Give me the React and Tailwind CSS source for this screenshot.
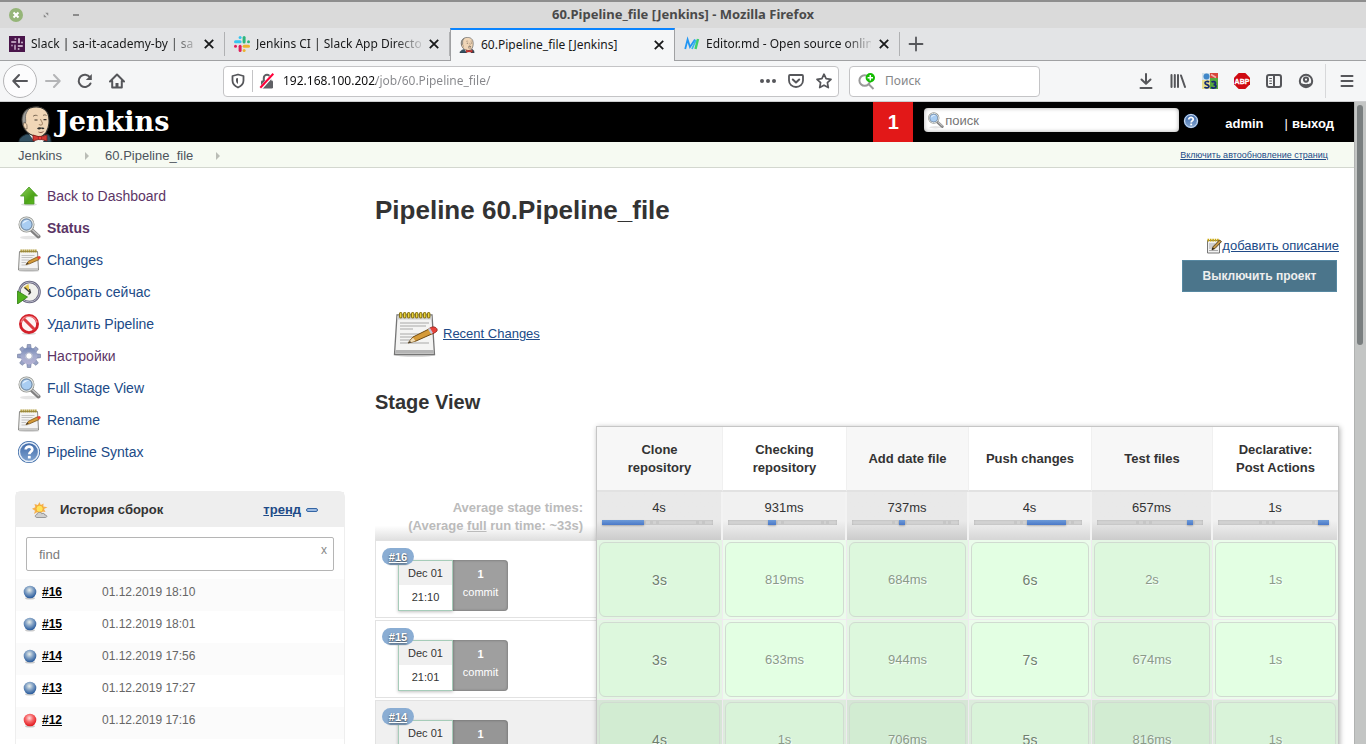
import React from "react";

/* ---------- browser chrome icons ---------- */

function SlackMark({ colors }) {
  const [a, b, c, d] = colors;
  return (
    <svg viewBox="0 0 16 16" className="size-4 shrink-0" aria-hidden="true">
      <g fill={a}><rect x="4.6" y="0" width="3" height="3" rx="1.5" /><rect x="0" y="4.3" width="7.6" height="3" rx="1.5" /></g>
      <g fill={b}><rect x="13" y="4.3" width="3" height="3" rx="1.5" /><rect x="8.6" y="0" width="3" height="7.4" rx="1.5" /></g>
      <g fill={c}><rect x="8.6" y="13" width="3" height="3" rx="1.5" /><rect x="8.6" y="8.8" width="7.4" height="3" rx="1.5" /></g>
      <g fill={d}><rect x="0" y="8.8" width="3" height="3" rx="1.5" /><rect x="4.6" y="8.8" width="3" height="7.2" rx="1.5" /></g>
    </svg>
  );
}

function SlackPurple() {
  const marks = [[0, "#b79ab8"], [90, "#c9b2ca"], [180, "#c4abc5"], [270, "#ab8bac"]];
  return (
    <svg viewBox="0 0 16 16" className="size-4 shrink-0" aria-hidden="true">
      <rect width="16" height="16" fill="#4a154b" />
      {marks.map(([angle, fill]) => (
        <g key={angle} fill={fill} transform={`rotate(${angle} 8 8)`}>
          <rect x="5.400" y="2" width="2" height="2" rx="1" />
          <rect x="2" y="5" width="5.400" height="2" rx="1" />
        </g>
      ))}
    </svg>
  );
}

function Butler({ className }) {
  return (
    <svg viewBox="0 0 34 36" className={className} aria-hidden="true">
      <path d="M1 36c0-4 3-6 8-8l12 3 8-3c3 1 4 4 4 8z" fill="#335061" stroke="#1b2a33" />
      <path d="M11 28l6 8h8l4-7-8 2z" fill="#f4f4f0" />
      <path d="M6 22C2 14 4 5 12 2c7-2.500 15-1 18 6 2 6 1 14-2 18.500-3 4-8 5.500-13 3-4-1.500-7-3.500-9-7.500z" fill="#f0d6b7" stroke="#30302e" strokeWidth="1.100" />
      <path d="M5 19C3 12 5 5 11 2.700c-2 3-3.500 5-3.500 8 0 3 .5 4 0 6.300-1-1-2.500-1-2.500 2z" fill="#9b9b97" stroke="#4b4b49" strokeWidth=".6" />
      <path d="M5.500 17.500c1.500-1.500 3.500 0 3.500 2.500v3c-2.500 0-4-2.500-3.500-5.500z" fill="#f0d6b7" stroke="#6d5c4b" strokeWidth=".7" />
      <path d="M15 10.500c1-1.500 3-1.500 4.500-.8M25 9.500c1-.8 2.500-.8 3.500 0" fill="none" stroke="#6d5c4b" strokeWidth=".9" />
      <path d="M16.500 14h3M25.500 13.600h3" stroke="#3b332b" strokeWidth="1.200" />
      <path d="M22.500 13c1 3 3 4 1.200 6-1.200.3-2.500 0-2.700-.8" fill="none" stroke="#8d6e52" strokeWidth=".9" />
      <path d="M19 22.500c1-1 2.500-1.500 4-.8 1.500-.6 3 0 3.500.6-1 1.300-2.200 1-3.300.3-1.200 1.100-3 1.200-4.200-.1z" fill="#30302e" />
      <path d="M20.500 26c1.500.8 3.500.7 5-.5" fill="none" stroke="#7a4a3a" strokeWidth=".9" />
      <path d="M15 29l7 2 7-2v6l-7-2-7 2z" fill="#d33833" stroke="#7d1a17" strokeWidth=".8" />
      <circle cx="22" cy="32" r="1.800" fill="#ef3d3a" stroke="#7d1a17" strokeWidth=".6" />
    </svg>
  );
}

function EditorMark() {
  return (
    <svg viewBox="0 0 16 16" className="size-4 shrink-0" fill="none" aria-hidden="true">
      <path d="M1.200 13L3.600 3.600 6 11l5-7.400" stroke="#2196f3" strokeWidth="1.800" />
      <path d="M8 13l4-9" stroke="#36b6e8" strokeWidth="1.800" />
      <path d="M11.500 13l2.500-10" stroke="#3ecf6e" strokeWidth="2.400" />
    </svg>
  );
}

function Ico({ children, className = "size-4" }) {
  return (
    <svg viewBox="0 0 16 16" className={className} fill="none" stroke="#55565a" strokeWidth="2" strokeLinecap="round" strokeLinejoin="round" aria-hidden="true">
      {children}
    </svg>
  );
}

const toolbar = [
  { label: "Downloads", icon: <Ico><path d="M8 1v9M3.500 6.500L8 10.800l4.500-4.300M2.500 15h11" /></Ico> },
  { label: "Library", icon: <Ico><path d="M1.500 2v12M4.800 2v12M8 2v12M11 2.500l4 11.500" strokeWidth="2" /></Ico> },
  {
    label: "S3",
    icon: (
      <svg viewBox="0 0 16 16" className="size-4" aria-hidden="true">
        <rect width="16" height="16" fill="#cfe0ea" />
        <rect x="8" width="8" height="5" fill="#d8453b" />
        <rect x="8" y="5" width="8" height="11" fill="#57a83c" />
        <rect y="7" width="8" height="9" fill="#e9de8a" />
        <circle cx="4.500" cy="3.500" r="3" fill="#3f86c8" />
        <path d="M9 1.500l5 3" stroke="#f3b5ae" strokeWidth="1.500" />
        <path d="M7 9.200c-1-1.200-4-1-4 .8 0 2 4 1.200 4 3.300 0 2-3.500 2-4.500.6M9.500 9.200c1.500-1.200 4-.6 4 .8 0 1-1 1.600-2 1.600 1.500 0 2.500.6 2.500 1.900 0 1.800-3.500 2-4.800.6" fill="none" stroke="#152a72" strokeWidth="1.700" />
      </svg>
    ),
  },
  {
    label: "Adblock Plus",
    icon: (
      <svg viewBox="0 0 16 16" className="size-4" aria-hidden="true">
        <path d="M4.700 0h6.600L16 4.700v6.600L11.300 16H4.700L0 11.300V4.700z" fill="#cf0a12" />
        <text x="8" y="10.700" textAnchor="middle" fontFamily="Liberation Sans, sans-serif" fontWeight="700" fontSize="7" fill="#fff" stroke="#fff" strokeWidth=".3">ABP</text>
      </svg>
    ),
  },
  { label: "Sidebar", icon: <Ico><rect x="1" y="2" width="14" height="12" rx="2" /><path d="M8 2v12" /><path d="M3.700 5.500h1.800M3.700 8h1.800M3.700 10.500h1.800" strokeWidth="1" /></Ico> },
  { label: "Account", icon: <Ico><circle cx="8" cy="8" r="6.200" /><circle cx="8" cy="6.600" r="2.100" /><path d="M3 10c1.500.8 3.500 1.200 5 1.200s3.500-.4 5-1.200l-2 3.500-3 1-3-1z" fill="#55565a" stroke="none" /></Ico> },
];

/* ---------- page icons ---------- */

function Notepad({ className }) {
  return (
    <svg viewBox="0 0 48 48" className={className} aria-hidden="true">
      <ellipse cx="24" cy="45" rx="20" ry="2" fill="#000" opacity=".14" />
      <path d="M6 5h35l2.500 39.500H3.500z" fill="#f4f4f3" stroke="#757575" strokeWidth="1.300" />
      <path d="M6.500 5.500h34l.5 4h-35z" fill="#cfcfcf" />
      <path d="M4.500 40h38.500v3.500H4z" fill="#b4b4b4" />
      <path d="M9 13h29M9 16h26M9 19h13M9 24h26M9 27h18M9 30h14M9 33h29" stroke="#a7a7a7" strokeWidth="1.200" />
      <g fill="#f0dc3c" stroke="#8a7415" strokeWidth="1.100">
        {[8.5, 12.5, 16.5, 20.5, 24.5, 28.5, 32.5, 36.5].map((x) => (
          <rect key={x} x={x} y="2.500" width="2.400" height="5.500" rx="1.200" />
        ))}
      </g>
      <path d="M17 33l5-6 18-9 3 5-18 8z" fill="#d59a38" stroke="#6f4a12" strokeWidth="1" />
      <path d="M17 33l5-5.500 2.500 3.500z" fill="#f1dcb4" /><path d="M17 33l2-2 1 1.500z" fill="#222" />
      <path d="M38 18.500l3-1.500c4-1 7 3 4 5l-3.500 2z" fill="#e8423a" stroke="#8c2620" strokeWidth=".8" />
      <path d="M37 19l2-1 3 5-2 1z" fill="#c3c8d6" />
    </svg>
  );
}

function NotepadMedium({ className }) {
  return (
    <svg viewBox="0 0 24 24" className={className} aria-hidden="true">
      <ellipse cx="12" cy="23" rx="10" ry="1" fill="#000" opacity=".14" />
      <path d="M2.500 3.500h18l1 18.500H1.500z" fill="#f4f4f3" stroke="#8a8a87" />
      <path d="M2 20h19v2H2z" fill="#c9c9c7" />
      <path d="M4.500 7.500h13M4.500 9.500h11M4.500 12h8M4.500 14.500h5M4.500 17h6" stroke="#b5b5b5" strokeWidth=".8" />
      <path d="M3.500 3h16.500" stroke="#a48b1c" strokeWidth="3.200" strokeDasharray="1.300 .7" />
      <path d="M9 16.500l2.500-3.300L20.500 8.800l1.500 2.800-9.500 4.200z" fill="#d59a38" stroke="#7a5212" strokeWidth=".8" />
      <path d="M8.800 16.600l2-2 .8 1.200z" fill="#333" />
      <path d="M20 9l1.500-.8c1.800-.6 3 1.600 1.500 2.600l-1.500.8z" fill="#e8423a" />
    </svg>
  );
}

function NotepadSmall() {
  return (
    <svg viewBox="0 0 16 16" className="size-4" aria-hidden="true">
      <path d="M1.500 2.500h12v12.500h-12z" fill="#f2f2f2" stroke="#777" />
      <path d="M3 6h6M3 8h5M3 10h3M3 12.500h9" stroke="#aaa" />
      <path d="M1.500 2.200h11.500" stroke="#c8a60c" strokeWidth="2.800" strokeDasharray="1.600 .8" />
      <path d="M6 11.800l1-3L13.500 2l2 1.600L9 10.500z" fill="#c79a48" stroke="#4c3512" strokeWidth=".9" />
      <path d="M6 11.800l.8-2 1.300 1z" fill="#111" />
    </svg>
  );
}

function Magnifier({ className }) {
  return (
    <svg viewBox="0 0 24 24" className={className} aria-hidden="true">
      <ellipse cx="12" cy="21.500" rx="9" ry="1.700" fill="#000" opacity=".1" />
      <path d="M15 14.500l6.500 6" stroke="#808080" strokeWidth="4" strokeLinecap="round" />
      <path d="M15.500 14l6 5.500" stroke="#c4c4c4" strokeWidth="1.500" strokeLinecap="round" />
      <circle cx="9.500" cy="8.500" r="6.600" fill="#a9cdf2" stroke="#8d8f8b" strokeWidth="2.800" />
      <circle cx="9.500" cy="8.500" r="6.600" fill="none" stroke="#e6e8e4" strokeWidth="1.400" />
      <circle cx="9.500" cy="8.500" r="5.600" fill="none" stroke="#5f86b8" strokeWidth=".7" />
      <path d="M5.500 8c.5-3 3.500-4.500 6.500-3.500-2 .5-5 2-6.500 3.500z" fill="#e7f2fd" />
    </svg>
  );
}

function Help({ className }) {
  return (
    <svg viewBox="0 0 24 24" className={className} aria-hidden="true">
      <defs>
        <linearGradient id="help" x1="0" y1="0" x2="0" y2="1"><stop offset="0" stopColor="#3c68a8" /><stop offset="1" stopColor="#7fa3d0" /></linearGradient>
      </defs>
      <circle cx="12" cy="12" r="11" fill="#3465a4" />
      <circle cx="12" cy="12" r="9.600" fill="url(#help)" stroke="#e6eef8" strokeWidth="1.500" />
      <path d="M8.700 9.600C8.700 5.500 15.500 5.700 15.300 9.500c-.1 2.300-3 2.300-3 4.700" fill="none" stroke="#fff" strokeWidth="2.700" />
      <rect x="10.900" y="15.900" width="2.800" height="2.600" fill="#fff" />
    </svg>
  );
}

function UpArrow({ className }) {
  return (
    <svg viewBox="0 0 24 24" className={className} aria-hidden="true">
      <defs>
        <linearGradient id="up" x1="0" y1="0" x2="1" y2="1"><stop offset="0" stopColor="#8fd35c" /><stop offset=".6" stopColor="#4ea41a" /><stop offset="1" stopColor="#5fc01f" /></linearGradient>
      </defs>
      <ellipse cx="12" cy="20.500" rx="8" ry="1.500" fill="#000" opacity=".15" />
      <path d="M12 3l8.500 9H17v8H7.500v-8h-4z" fill="url(#up)" stroke="#4a9a24" strokeWidth=".8" strokeLinejoin="round" />
    </svg>
  );
}

function ClockPlay({ className }) {
  return (
    <svg viewBox="0 0 24 24" className={className} aria-hidden="true">
      <circle cx="12.500" cy="12" r="10" fill="#f1f1ec" stroke="#69687f" strokeWidth="2.600" />
      <circle cx="12.500" cy="12" r="10" fill="none" stroke="#b5b4c6" strokeWidth="1" />
      <path d="M12.500 12L6.500 7.500 11.500 4z" fill="#e5c64b" />
      <path d="M7.500 7.500l5.500 5M12.500 9l1 3.500-2 2" fill="none" stroke="#3c3c3c" strokeWidth="1.300" />
      <path d="M.5 11l10 6-10 7z" fill="#4fb01c" stroke="#2f7d10" strokeWidth=".8" />
    </svg>
  );
}

function Forbidden({ className }) {
  return (
    <svg viewBox="0 0 24 24" className={className} aria-hidden="true">
      <ellipse cx="12" cy="21.500" rx="7" ry="1.500" fill="#000" opacity=".15" />
      <circle cx="12" cy="12" r="8.600" fill="#fdf4f4" stroke="#d3202a" strokeWidth="2.800" />
      <path d="M6.500 6.500l11 11" stroke="#dc3a40" strokeWidth="3" />
      <path d="M4 10.500a8.300 8.300 0 0 1 16 0" fill="none" stroke="#ee8084" strokeWidth="1.400" />
    </svg>
  );
}

function Gear({ className }) {
  return (
    <svg viewBox="0 0 24 24" className={className} aria-hidden="true">
      <defs>
        <linearGradient id="gear" x1="0" y1="0" x2="0" y2="24" gradientUnits="userSpaceOnUse"><stop offset="0" stopColor="#6279ab" /><stop offset=".5" stopColor="#a3abcd" /><stop offset="1" stopColor="#bcb4d6" /></linearGradient>
      </defs>
      <g fill="#98a2c6" stroke="#6c7798" strokeWidth=".6">
        {[0, 45, 90, 135, 180, 225, 270, 315].map((a) => (
          <path key={a} d="M9.800 5L10.300.5h3.400L14.200 5z" transform={`rotate(${a} 12 12)`} />
        ))}
      </g>
      <circle cx="12" cy="12" r="6" fill="none" stroke="url(#gear)" strokeWidth="4.800" />
      <circle cx="12" cy="12" r="3.300" fill="#fff" stroke="#8a93b3" strokeWidth=".8" />
    </svg>
  );
}

function SunCloud() {
  return (
    <svg viewBox="0 0 16 16" className="size-4" aria-hidden="true">
      <path d="M7.500 0l1.300 3 2.800-1.600-.3 3.200 4.200.6-3.500 1.800 1.500 3-3.500-.5-2.500 4-2-3.500L2 12l1-3.300L0 6.800l3.300-1.500L2.500 2l3.300 1z" fill="#f6b04e" />
      <circle cx="7.600" cy="6.800" r="3.600" fill="#ffe35a" stroke="#f0a22e" strokeWidth=".8" />
      <path d="M5 15.500c-2.500 0-2-3 0-3 .3-2.500 4-3 4.800-.8 1.500-1 3.200 0 3 1.300 2.800 0 2.500 2.500.4 2.500z" fill="#cfcfcf" stroke="#858585" strokeWidth=".8" />
    </svg>
  );
}

function Ball({ red }) {
  return (
    <svg viewBox="0 0 16 16" className="size-4 shrink-0" aria-hidden="true">
      <defs>
        <radialGradient id={red ? "ballRed" : "ballBlue"} cx=".45" cy=".35" r=".65">
          <stop offset="0" stopColor={red ? "#ffe0e0" : "#eaefea"} />
          <stop offset=".45" stopColor={red ? "#f76a6c" : "#86a4c6"} />
          <stop offset="1" stopColor={red ? "#e0151a" : "#24579a"} />
        </radialGradient>
      </defs>
      <ellipse cx="8" cy="14.300" rx="5" ry="1.200" fill="#000" opacity=".2" />
      <circle cx="8" cy="8" r="6.300" fill={red ? "url(#ballRed)" : "url(#ballBlue)"} />
    </svg>
  );
}

/* ---------- data ---------- */

const tabs = [
  { title: "Slack | sa-it-academy-by | sa", icon: <SlackPurple /> },
  { title: "Jenkins CI | Slack App Directo", icon: <SlackMark colors={["#36c5f0", "#2eb67d", "#ecb22e", "#e01e5a"]} /> },
  { title: "60.Pipeline_file [Jenkins]", icon: <Butler className="size-4 shrink-0" />, active: true },
  { title: "Editor.md - Open source onlin", icon: <EditorMark /> },
];

const tasks = [
  { label: "Back to Dashboard", Icon: UpArrow, visited: true },
  { label: "Status", Icon: Magnifier, visited: true, current: true },
  { label: "Changes", Icon: NotepadMedium },
  { label: "Собрать сейчас", Icon: ClockPlay },
  { label: "Удалить Pipeline", Icon: Forbidden },
  { label: "Настройки", Icon: Gear, visited: true },
  { label: "Full Stage View", Icon: Magnifier },
  { label: "Rename", Icon: NotepadMedium },
  { label: "Pipeline Syntax", Icon: Help },
];

const builds = [
  { id: "#16", date: "01.12.2019 18:10" },
  { id: "#15", date: "01.12.2019 18:01" },
  { id: "#14", date: "01.12.2019 17:56" },
  { id: "#13", date: "01.12.2019 17:27" },
  { id: "#12", date: "01.12.2019 17:16", red: true },
];

const stages = [
  { name: ["Clone", "repository"], avg: "4s", start: 0, size: 38, col: "w-[126px]" },
  { name: ["Checking", "repository"], avg: "931ms", start: 37, size: 7, col: "w-[124px]" },
  { name: ["Add date file"], avg: "737ms", start: 44, size: 6, col: "w-[122px]" },
  { name: ["Push changes"], avg: "4s", start: 49, size: 36, col: "w-[123px]" },
  { name: ["Test files"], avg: "657ms", start: 85, size: 6, col: "w-[121px]" },
  { name: ["Declarative:", "Post Actions"], avg: "1s", start: 90, size: 10, col: "w-[126px]" },
];
const ticks = [37, 43, 49, 85, 90];

const runs = [
  { id: "#16", time: "21:10", cells: ["3s", "819ms", "684ms", "6s", "2s", "1s"] },
  { id: "#15", time: "21:01", cells: ["3s", "633ms", "944ms", "7s", "674ms", "1s"] },
  { id: "#14", time: "20:56", cells: ["4s", "1s", "706ms", "5s", "816ms", "1s"], dim: true },
];

/* ---------- browser chrome ---------- */

function BrowserChrome() {
  return (
    <div className="shrink-0 font-['Noto_Sans',sans-serif] text-xs text-[#18191a]">
      <div className="flex h-7 items-center border-t-2 border-[#8e8e8e] bg-[#dadada] px-2">
        <div className="flex w-24 items-center gap-3.5">
          <button aria-label="Close window" className="flex size-4 items-center justify-center">
            <svg viewBox="0 0 14 14" className="size-3.5"><circle cx="7" cy="7" r="7" fill="#95b578" /><path d="M4.500 4.500l5 5M9.500 4.500l-5 5" stroke="#fff" strokeWidth="2" /></svg>
          </button>
          <button aria-label="Maximize" className="flex size-4 items-center justify-center">
            <svg viewBox="0 0 8 8" className="size-1.5"><path d="M3 1h4v4zM1 3v4h4z" fill="#8b8b8b" /></svg>
          </button>
          <button aria-label="Minimize" className="flex size-4 items-center justify-center">
            <span className="h-0.5 w-1.5 bg-[#8b8b8b]" />
          </button>
        </div>
        <div className="flex-1 text-center text-[13px] font-bold text-[#4a4a4a]">60.Pipeline_file [Jenkins] - Mozilla Firefox</div>
        <div className="w-24" />
      </div>

      <div className="flex h-[33px] bg-[#e3e4e6]">
        {tabs.map((t) => (
          <div
            key={t.title}
            className={
              t.active
                ? "flex w-[225px] items-center gap-1.5 border-x border-t-2 border-x-[#a0a1a3] border-t-[#0a84ff] bg-[#f5f6f7] pr-2 pb-0.5 pl-2"
                : "flex w-[225px] items-center border-b border-[#a0a1a3]"
            }
          >
            {t.active ? (
              <TabBody t={t} />
            ) : (
              <div className="flex h-6 min-w-0 flex-1 items-center gap-1.5 border-r border-[#b0b1b3] pr-2 pl-[9px]">
                <TabBody t={t} fade />
              </div>
            )}
          </div>
        ))}
        <div className="flex flex-1 items-center border-b border-[#a0a1a3] pl-2">
          <button aria-label="New tab" className="flex size-4 items-center justify-center">
            <Ico className="size-4"><path d="M8 1.500v13M1.500 8h13" strokeWidth="1.800" /></Ico>
          </button>
        </div>
      </div>

      <div className="flex h-[41px] items-center border-b border-[#cccdcf] bg-[#f5f6f7] pr-[3px] pl-[3px]">
        <button aria-label="Back" className="flex size-[34px] items-center justify-center rounded-full border border-[#b5b5b7] bg-[#fcfcfd]">
          <Ico><path d="M15 8H1.500M7 2L1.300 8 7 14" /></Ico>
        </button>
        <button aria-label="Forward" className="flex size-8 items-center justify-center opacity-40">
          <Ico><path d="M1 8h13.500M9 2l5.700 6L9 14" /></Ico>
        </button>
        <button aria-label="Reload" className="flex size-8 items-center justify-center">
          <Ico><path d="M13.500 10.500A6.200 6.200 0 1 1 13 4.300" /><path d="M14.800 1v6H8.800z" fill="#55565a" stroke="none" /></Ico>
        </button>
        <button aria-label="Home" className="flex size-8 items-center justify-center">
          <Ico><path d="M1 8.500L8 1.500l7 7M3.200 8v6.500h9.600V8" /><path d="M8 14v-4" strokeWidth="3" strokeLinecap="butt" /></Ico>
        </button>

        <div className="ml-[90px] flex h-[31px] min-w-0 flex-1 items-center rounded-sm border border-[#c4c4c6] bg-white pr-1.5 pl-1.5">
          <Ico><path d="M8 1.500l5.500 1.500v4.500c0 3-2 5.500-5.500 7-3.500-1.500-5.500-4-5.500-7V3z" strokeWidth="1.800" /><path d="M8 5v6c-1.300-.7-2-2-2-3.500V5.500z" fill="#55565a" stroke="none" /></Ico>
          <span className="mx-1.5 h-[22px] w-px bg-[#c4c4c6]" />
          <svg viewBox="0 0 16 16" className="size-4 shrink-0" aria-hidden="true">
            <rect x="2" y="7.500" width="12" height="8" rx="1.200" fill="#606165" />
            <path d="M4.800 8V5a3.200 3.200 0 0 1 6.400 0v3" fill="none" stroke="#606165" strokeWidth="2" />
            <path d="M1.500 15.500l13-14.500" stroke="#fff" strokeWidth="3.500" />
            <path d="M1.300 14.700l13-14" stroke="#ff0039" strokeWidth="2" />
          </svg>
          <input
            aria-label="Address"
            defaultValue="192.168.100.202/job/60.Pipeline_file/"
            className="ml-2 min-w-0 flex-1 bg-[linear-gradient(90deg,#0c0c0d_93px,#85868a_93px)] bg-clip-text text-xs text-transparent outline-none"
          />
          <div className="flex items-center gap-3">
            <button aria-label="Page actions"><Ico><g fill="#55565a" stroke="none"><circle cx="2" cy="8" r="2" /><circle cx="8" cy="8" r="2" /><circle cx="14" cy="8" r="2" /></g></Ico></button>
            <button aria-label="Save to Pocket"><Ico><path d="M2 2h12a1 1 0 0 1 1 1v4.500a7 6.500 0 0 1-14 0V3a1 1 0 0 1 1-1z" strokeWidth="1.800" /><path d="M4.800 6.500L8 9.500l3.200-3" /></Ico></button>
            <button aria-label="Bookmark"><Ico><path d="M8 1.200l2.100 4.500 4.900.6-3.600 3.400.9 4.900L8 12.200l-4.300 2.400.9-4.900L1 6.300l4.900-.6z" strokeWidth="1.700" /></Ico></button>
          </div>
        </div>

        <div className="mr-[90px] ml-2.5 flex h-[31px] w-[191px] items-center gap-2.5 rounded-sm border border-[#c4c4c6] bg-white px-2">
          <svg viewBox="0 0 17 17" className="size-[17px] shrink-0" aria-hidden="true">
            <path d="M10.500 11l5 5" stroke="#999" strokeWidth="2" />
            <circle cx="6.700" cy="7.500" r="5.300" fill="none" stroke="#999" strokeWidth="2" />
            <circle cx="12.300" cy="4.700" r="4.700" fill="#12bc00" />
            <path d="M12.300 2v5.400M9.600 4.700H15" stroke="#fff" strokeWidth="1.500" />
          </svg>
          <input aria-label="Поиск" placeholder="Поиск" className="min-w-0 flex-1 text-xs outline-none placeholder:text-[#858688]" />
        </div>

        {toolbar.map((b) => (
          <button key={b.label} aria-label={b.label} className="flex size-8 items-center justify-center">{b.icon}</button>
        ))}
        <span className="mr-[5px] ml-[3px] h-[34px] w-px bg-[#d7d8da]" />
        <button aria-label="Menu" className="flex size-8 items-center justify-center">
          <Ico><path d="M2.500 3h11M2.500 8h11M2.500 13h11" /></Ico>
        </button>
      </div>
    </div>
  );
}

function TabBody({ t, fade }) {
  return (
    <>
      {t.icon}
      <span className={`min-w-0 flex-1 whitespace-nowrap ${fade ? "[mask-image:linear-gradient(90deg,#000_calc(100%-26px),rgba(0,0,0,0.15))]" : ""}`}>{t.title}</span>
      <button aria-label={`Close ${t.title}`} className="flex w-3.5 items-center justify-center">
        <svg viewBox="0 0 10 10" className="size-2.5"><path d="M.8.8l8.400 8.400M9.200.8L.8 9.200" stroke="#18191a" strokeWidth="1.800" /></svg>
      </button>
    </>
  );
}

/* ---------- Jenkins page ---------- */

function Header() {
  return (
    <header>
      <div className="flex h-10 items-center bg-black pl-[18px] text-white">
        <a href="#" className="flex h-10 items-end gap-1">
          <Butler className="h-9 w-[34px]" />
          <span className="pb-1 font-['DejaVu_Serif',serif] text-[27px] leading-8 font-bold">Jenkins</span>
        </a>
        <a href="#" className="ml-auto flex h-10 w-10 items-center justify-center bg-[#e21818] text-xl font-bold">1</a>
        <div className="mb-1 ml-[11px] flex h-6 w-[255px] items-center gap-px rounded bg-white pl-[3px] shadow-[inset_0_0_4px_rgba(0,0,0,0.35)]">
          <Magnifier className="size-[17px] shrink-0" />
          <input aria-label="поиск" placeholder="поиск" className="min-w-0 flex-1 pt-0.5 text-[13px] text-[#333] outline-none placeholder:text-[#757575]" />
        </div>
        <a href="#" aria-label="Help" className="mb-0.5 ml-1"><Help className="size-4" /></a>
        <a href="#" className="mt-1 ml-[26px] text-[13px] font-bold">admin</a>
        <div className="mt-1 mr-5 ml-[21px] flex gap-1 text-[13px] font-bold">
          <span className="font-normal">|</span>
          <a href="#">выход</a>
        </div>
      </div>
      <nav className="flex h-[26px] items-center border-b border-[#d3d7cf] bg-[#f6faf2] pt-0.5 pr-[26px] pl-[18px] text-[13px] text-[#4d545d]">
        <a href="#">Jenkins</a>
        <Crumb />
        <a href="#">60.Pipeline_file</a>
        <Crumb />
        <a href="#" className="ml-auto text-[9px] text-[#204a87] underline">Включить автообновление страниц</a>
      </nav>
    </header>
  );
}

function Crumb() {
  return (
    <svg viewBox="0 0 4 8" className="mr-4 ml-[23px] h-2 w-1" aria-hidden="true"><path d="M0 0l4 4-4 4z" fill="#babdb6" /></svg>
  );
}

function Sidebar() {
  return (
    <aside className="w-[345px] shrink-0 pt-3 pl-[15px]">
      <ul>
        {tasks.map(({ label, Icon, visited, current }) => (
          <li key={label} className="h-8">
            <a
              href="#"
              className={`flex h-8 items-center gap-1.5 pl-0.5 text-sm ${visited ? "text-[#5c3566]" : "text-[#204a87]"} ${current ? "font-bold" : ""}`}
            >
              <Icon className="size-6" />
              {label}
            </a>
          </li>
        ))}
      </ul>

      <section className="mt-[23px] rounded-t-md border border-[#eee] pb-8">
        <div className="flex h-[35px] items-center bg-[#eee] pr-[26px] pl-4">
          <SunCloud />
          <h2 className="ml-3 text-[13px] font-bold text-[#333]">История сборок</h2>
          <a href="#" className="ml-auto text-[13px] font-bold text-[#204a87] underline">тренд</a>
          <span className="ml-[5px] h-1 w-3 rounded-xs border border-[#3465a4] bg-[#9dbbe2]" />
        </div>
        <div className="px-2.5 pt-2.5 pb-2">
          <div className="flex h-[34px] items-center rounded-xs border border-[#b5b5b5] pr-1.5 pl-3">
            <input aria-label="find" placeholder="find" className="min-w-0 flex-1 pt-0.5 text-[13px] outline-none placeholder:text-[#7b7b7b]" />
            <button aria-label="Clear" className="mb-2 text-xs text-[#888]">x</button>
          </div>
        </div>
        <table className="w-full text-xs">
          <tbody>
            {builds.map((b) => (
              <tr key={b.id} className="h-8 odd:bg-[#fbfbfb]">
                <td className="w-[86px] pt-0 pb-1.5 pl-1.5">
                  <span className="flex items-center gap-1">
                    <Ball red={b.red} />
                    <a href="#" className="font-bold text-black underline">{b.id}</a>
                  </span>
                </td>
                <td className="pb-1.5 text-[#666]">{b.date}</td>
              </tr>
            ))}
          </tbody>
        </table>
      </section>
    </aside>
  );
}

function StageBar({ start, size }) {
  return (
    <div className="relative mt-[3px] mr-2 ml-[5px] h-[5px] bg-[#d2d2d2] shadow-[inset_0_0_2px_rgba(0,0,0,0.18)]">
      {ticks.map((t) => (
        <span key={t} className="absolute inset-y-px w-[3px] bg-[#c6c6c6]" style={{ left: `${t}%` }} />
      ))}
      <span
        className="absolute inset-y-0 bg-linear-to-b from-[#6e9bd8] to-[#4a78c8] shadow-[0_1px_2px_rgba(0,0,0,0.25)]"
        style={{ left: `${start}%`, width: `${size}%` }}
      />
    </div>
  );
}

function RunCard({ run }) {
  return (
    <div className={`h-[78px] border border-r-0 border-[#e2e2e2] pt-[7px] pl-1.5 ${run.dim ? "bg-[#f0f0f0]" : "bg-white"}`}>
      <div className="relative w-[126px] pt-3 pl-4 text-[11px]">
        <a href="#" className="absolute top-0 left-0 flex h-[17px] w-8 items-center justify-center rounded-full bg-[#8aadd3] font-bold text-white underline [text-shadow:0_1px_2px_#333]">{run.id}</a>
        <div className="flex h-[51px] text-center">
          <div className="flex w-[55px] flex-col border border-[#a6ccb9] text-[#333] shadow-[0_1px_3px_rgba(0,0,0,0.25)]">
            <div className="h-6 bg-[#f0f0f0] leading-6">Dec 01</div>
            <div className="flex-1 bg-white leading-6">{run.time}</div>
          </div>
          <div className={`w-[55px] rounded-r pt-[5px] leading-[18px] text-white shadow-[inset_0_0_3px_rgba(0,0,0,0.35)] ${run.dim ? "bg-[#969696]" : "bg-[#9f9f9f]"}`}>
            <b>1</b>
            <div>commit</div>
          </div>
        </div>
      </div>
    </div>
  );
}

function cellTone(i, dim) {
  if (dim) return i % 2 ? ["bg-[#dcecdc]", "bg-[#d9f3d9]"] : ["bg-[#d6e6d6]", "bg-[#d2ecd2]"];
  return i % 2 ? ["bg-[#ebfceb]", "bg-[#e3ffe3]"] : ["bg-[#e4f6e4]", "bg-[#ddf8dd]"];
}

function StageTable() {
  return (
    <div className="relative mt-3">
      <table className="w-full table-fixed border-separate border-spacing-0 text-[13px] leading-[18px] text-[#333]">
        <colgroup>
          <col className="w-[222px]" />
          {stages.map((s) => <col key={s.avg + s.start} className={s.col} />)}
        </colgroup>
        <thead>
          <tr className="h-[66px]">
            <td />
            {stages.map((s, i) => (
              <th key={s.start} className={`border-r border-b-2 border-r-[#f0f0f0] border-b-[#e2e2e2] px-2 pt-0.5 text-center align-middle font-bold ${i % 2 ? "bg-white" : "bg-[#f7f7f7]"}`}>
                {s.name.map((n) => <div key={n}>{n}</div>)}
              </th>
            ))}
          </tr>
          <tr className="h-12">
            <th className="bg-linear-to-b from-white from-70% to-[#e0e0e0] pt-0.5 pr-3.5 text-right font-bold text-[#bbb]">
              Average stage times:
              <br />
              (Average <span className="underline">full</span> run time: ~33s)
            </th>
            {stages.map((s, i) => (
              <td key={s.start} className={`border-r-2 border-[#f3f3f3] bg-linear-to-b from-60% pt-[7px] text-center align-top ${i % 2 ? "from-[#f1f1f1] to-[#d6d6d6]" : "from-[#e9e9e9] to-[#cbcbcb]"}`}>
                {s.avg}
                <StageBar start={s.start} size={s.size} />
              </td>
            ))}
          </tr>
        </thead>
        <tbody>
          {runs.map((run) => (
            <tr key={run.id} className="h-20">
              <td className="align-top"><RunCard run={run} /></td>
              {run.cells.map((c, i) => {
                const [back, box] = cellTone(i, run.dim);
                return (
                  <td key={i} className={`border-r border-b border-[#efeaef] p-0.5 ${back}`}>
                    <div className={`flex h-[75px] items-center justify-center rounded-md border border-[#d1dbd1] [text-shadow:1px_1px_1px_#fff] ${box} ${c.length < 3 && (i === 0 || i === 3) ? "text-sm text-[#6f7f6f]" : "text-[#8a9a8a]"}`}>
                      {c}
                    </div>
                  </td>
                );
              })}
            </tr>
          ))}
        </tbody>
      </table>
      <div className="pointer-events-none absolute inset-y-0 right-0 left-[221px] border border-[#c6c6c6] shadow-[1px_1px_5px_rgba(0,0,0,0.3)]" />
    </div>
  );
}

function Main() {
  return (
    <main className="min-w-0 flex-1 pt-[27px] pr-[15px] text-[13px] text-[#333]">
      <h1 className="text-[26px] leading-[30px] font-bold">Pipeline 60.Pipeline_file</h1>
      <div className="mt-[13px] flex flex-col items-end">
        <a href="#" className="flex h-4 items-center text-[#204a87] underline">
          <NotepadSmall />
          добавить описание
        </a>
        <button className="mt-1.5 mr-0.5 h-8 w-[155px] border border-[#5788a1] bg-[#4b758b] text-xs font-bold text-[#eee]">Выключить проект</button>
      </div>
      <a href="#" className="mt-[18px] ml-4 flex h-12 w-fit items-center gap-1 text-[#204a87] underline">
        <Notepad className="size-12" />
        Recent Changes
      </a>
      <h2 className="mt-8 text-xl leading-6 font-bold">Stage View</h2>
      <StageTable />
    </main>
  );
}

export default function App() {
  return (
    <div className="flex h-screen flex-col overflow-hidden bg-white font-['Liberation_Sans',Arial,sans-serif]">
      <BrowserChrome />
      <div className="flex min-h-0 flex-1">
        <div className="min-w-0 flex-1 overflow-hidden">
          <Header />
          <div className="flex gap-[30px]">
            <Sidebar />
            <Main />
          </div>
        </div>
        <div className="w-3 shrink-0 border-l border-[#b0b2b1] bg-[#c3c5c4] px-0.5 pt-[3px]">
          <div className="h-60 w-1.5 rounded-full bg-[#797e7f]" />
        </div>
      </div>
    </div>
  );
}
